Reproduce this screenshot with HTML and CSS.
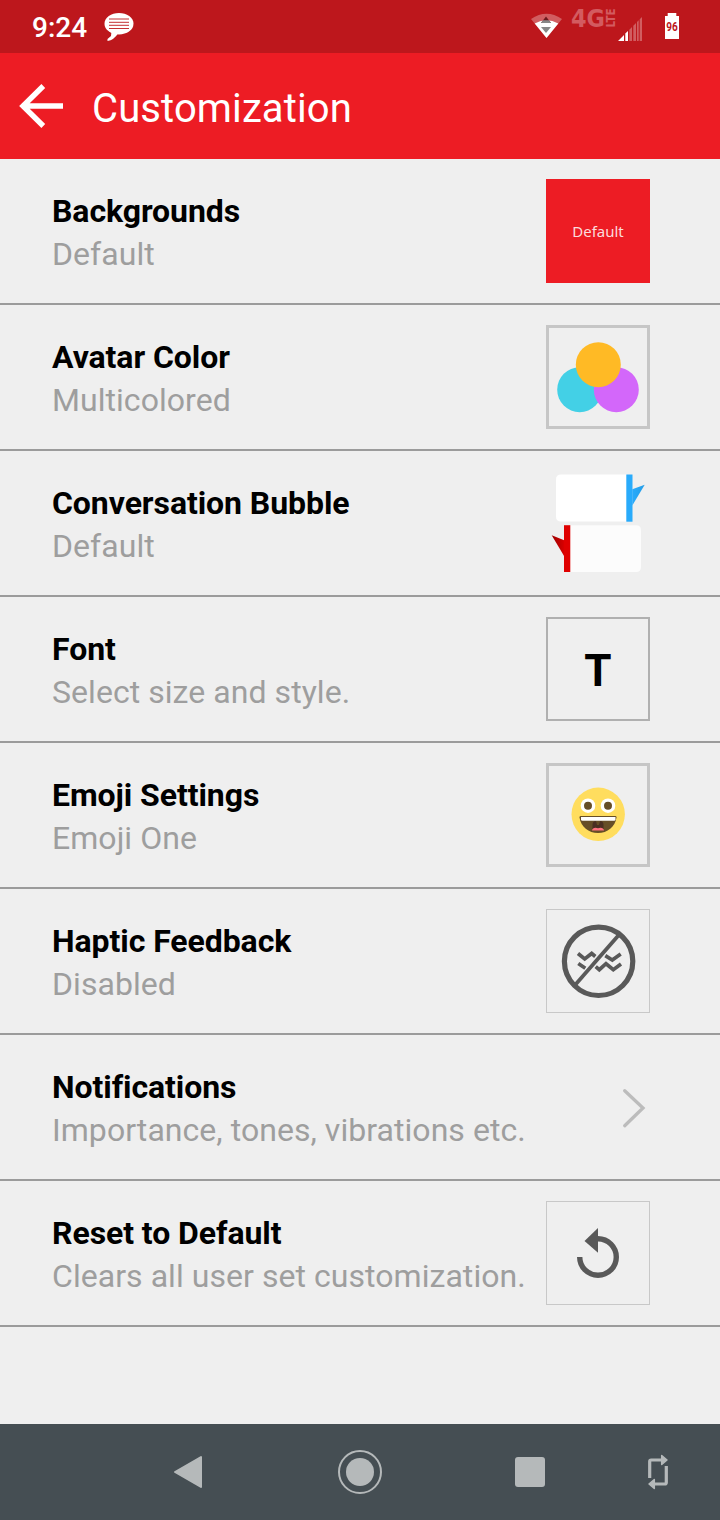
FILE: index.html
```html
<!DOCTYPE html>
<html lang="en">
<head>
    <meta charset="UTF-8">
    <meta name="viewport" content="width=device-width, initial-scale=1.0">
    <title>Customization</title>
    <link rel="stylesheet" href="styles.css">
</head>
<body>

    <div class="status-bar">
        <span class="time">9:24</span>
        <svg class="chat" width="30" height="30" viewBox="104 12 30 30">
            <ellipse cx="119" cy="23.7" rx="14.5" ry="10.8" fill="#fff"/>
            <path d="M111.500 31L111 36L107.500 39V41Q114 40 118 33.500Z" fill="#fff"/>
            <path d="M109 19H129M109 22.300H129M109 25.300H129M109 28.500H129" stroke="#bd171c" stroke-width="0.9"/>
        </svg>
        <svg class="signals" width="160" height="53" viewBox="525 0 160 53">
            <path d="M531 19Q546.500 8.500 562 19L546.500 38Z" fill="#fff" fill-opacity="0.3"/>
            <path d="M534.700 23.500Q546.500 17 558.300 23.500L546.500 38Z" fill="#fff"/>
            <path d="M541 23L546 16.500L551 23Z" fill="#6b1a1d"/>
            <path d="M541 23L543 20.300H549L551 23Z" fill="#888"/>
            <path d="M541 27H551L546 33Z" fill="#888"/>
            <g class="network">
                <text x="571" y="27" font-size="25" textLength="34" lengthAdjust="spacingAndGlyphs">4G</text>
                <text transform="translate(615 27.500) rotate(-90)" font-size="12" textLength="19" lengthAdjust="spacingAndGlyphs">LTE</text>
            </g>
            <path d="M618 41L624 35V41ZM625.300 33.500L628 31V41H625.300Z" fill="#fff"/>
            <path d="M629.300 29.700L632 27V41H629.300ZM633.300 25.700L636 23V41H633.300ZM637 22L638.700 20.300V41H637ZM639.700 19.300L642 17V41H639.700Z" fill="#fff" fill-opacity="0.3"/>
            <path d="M665 16H667.700V13H676.300V16H679V39H665Z" fill="#fff"/>
            <text class="battery" x="672" y="31.300" text-anchor="middle" textLength="11.500" lengthAdjust="spacingAndGlyphs">96</text>
        </svg>
    </div>

    <div class="header">
        <svg width="46" height="46" viewBox="18 83 46 46">
            <path d="M43.300 86L23 106L43.300 126M22 106H63" fill="none" stroke="#fff" stroke-width="5.400"/>
        </svg>
        <h1>Customization</h1>
    </div>

    <div class="settings">
        <div class="row">
            <div class="label">
                <h2>Backgrounds</h2>
                <p>Default</p>
            </div>
            <div class="thumb red">Default</div>
        </div>

        <div class="row">
            <div class="label">
                <h2>Avatar Color</h2>
                <p>Multicolored</p>
            </div>
            <svg class="thumb thick" viewBox="0 0 104 104">
                <circle cx="33.700" cy="64.700" r="22.500" fill="#43d0e6"/>
                <circle cx="70.300" cy="64.700" r="22.500" fill="#d367fa"/>
                <circle cx="52.300" cy="39.700" r="22.500" fill="#ffba25"/>
            </svg>
        </div>

        <div class="row">
            <div class="label">
                <h2>Conversation Bubble</h2>
                <p>Default</p>
            </div>
            <svg class="thumb" viewBox="0 0 104 104">
                <defs>
                    <linearGradient id="blueTail">
                        <stop offset="0" stop-color="#29abfb"/>
                        <stop offset="1" stop-color="#259de6"/>
                    </linearGradient>
                    <linearGradient id="redTail">
                        <stop offset="0" stop-color="#9c0000"/>
                        <stop offset="1" stop-color="#d90000"/>
                    </linearGradient>
                </defs>
                <path d="M81 3.500H15Q10 3.500 10 8.500V45.500Q10 50.500 15 50.500H81Z" fill="#fff"/>
                <path d="M80.300 3.500H86.500V50.700H80.300Z" fill="#29abfb"/>
                <path d="M86.300 18.300L98.700 13.700L86.300 34.500Z" fill="url(#blueTail)"/>
                <path d="M24 54.300H90Q95 54.300 95 59.300V96Q95 101 90 101H24Z" fill="#fcfcfc"/>
                <path d="M18 54.200H24.300V101H18Z" fill="#df0000"/>
                <path d="M18.200 69.300L5.700 64.200L18.200 85.300Z" fill="url(#redTail)"/>
            </svg>
        </div>

        <div class="row">
            <div class="label">
                <h2>Font</h2>
                <p>Select size and style.</p>
            </div>
            <div class="thumb medium">T</div>
        </div>

        <div class="row">
            <div class="label">
                <h2>Emoji Settings</h2>
                <p>Emoji One</p>
            </div>
            <svg class="thumb thick" viewBox="0 0 104 104">
                <circle cx="52.200" cy="51.300" r="26.700" fill="#ffdd5e"/>
                <circle cx="42" cy="42.700" r="7.300" fill="#fff"/>
                <circle cx="62" cy="42.700" r="7.300" fill="#fff"/>
                <circle cx="42" cy="42.700" r="4" fill="#664e27"/>
                <circle cx="62" cy="42.700" r="4" fill="#664e27"/>
                <path d="M34.500 53H69.500Q70.700 53 70.500 54.500C69 64 61.500 70 52 70S35 64 33.500 54.500Q33.300 53 34.500 53Z" fill="#664e27"/>
                <path d="M46.500 66V62Q46.500 58 50 58L51 62H53L54 58Q57.500 58 57.500 62V66Z" fill="#4b2f22"/>
                <path d="M35 54H69.500V56.500Q69.500 57.700 68 57.700H36.500Q35 57.700 35 56.500Z" fill="#fff"/>
                <path d="M46 67.500Q46.500 64.700 49.500 64.700L52 65.200L54.500 64.700Q57.500 64.700 58 67.500Z" fill="#ff717f"/>
            </svg>
        </div>

        <div class="row">
            <div class="label">
                <h2>Haptic Feedback</h2>
                <p>Disabled</p>
            </div>
            <svg class="thumb thin" viewBox="0 0 104 104">
                <g fill="none" stroke="#595959">
                    <circle cx="52.600" cy="52.300" r="34.200" stroke-width="5.200"/>
                    <path d="M29.300 75.700L73 25.700" stroke-width="3.800"/>
                    <path d="M32 44.500L38.700 50L45.700 44.500L49.300 47.500M59.300 46.700L66.300 51L74.700 45M32.300 54.500L39.300 59.300M49.700 57.700L53.300 60.700L60 54.700L67.300 60.700L75 55" stroke-width="3.700"/>
                </g>
            </svg>
        </div>

        <div class="row">
            <div class="label">
                <h2>Notifications</h2>
                <p>Importance, tones, vibrations etc.</p>
            </div>
            <svg class="thumb" viewBox="0 0 104 104">
                <path d="M78.700 35.700L97 53L78.700 70.700" fill="none" stroke="#bcbcbc" stroke-width="3.300" stroke-linecap="round"/>
            </svg>
        </div>

        <div class="row">
            <div class="label">
                <h2>Reset to Default</h2>
                <p>Clears all user set customization.</p>
            </div>
            <svg class="thumb thin" viewBox="0 0 104 104">
                <path d="M33.700 56A18.300 18.300 0 1 0 52 37.700H50" fill="none" stroke="#595959" stroke-width="5.400"/>
                <path d="M52 27V51.700L38.500 40Z" fill="#595959"/>
            </svg>
        </div>
    </div>

    <div class="nav-bar">
        <svg width="44" height="44" viewBox="166 1450 44 44">
            <path d="M175 1472L201 1457V1487Z" fill="#b5b9ba" stroke="#b5b9ba" stroke-width="2" stroke-linejoin="round"/>
        </svg>
        <svg width="44" height="44" viewBox="0 0 44 44">
            <circle cx="22" cy="22" r="21" fill="none" stroke="#b5b9ba" stroke-width="2"/>
            <circle cx="22" cy="22" r="14" fill="#b5b9ba"/>
        </svg>
        <div class="recent"></div>
        <svg width="40" height="40" viewBox="0 0 40 40">
            <path d="M11.700 26V9.500Q11.700 8 13.200 8H24M28.300 14V30.500Q28.300 32 26.800 32H16" fill="none" stroke="#b5b9ba" stroke-width="3.200"/>
            <path d="M23.700 3.500V12.500L29 8ZM16.300 27.500V36.500L11 32Z" fill="#b5b9ba" stroke="#b5b9ba" stroke-width="1.500" stroke-linejoin="round"/>
        </svg>
    </div>

</body>
</html>
```
FILE: styles.css
```css
* {
    box-sizing: border-box;
}
body {
    margin: 0;
    height: 1520px;
    display: flex;
    flex-direction: column;
    font-family: Roboto, sans-serif;
    background-color: #efefef;
}
h1, h2, p {
    margin: 0;
}
.status-bar {
    display: flex;
    align-items: center;
    height: 53px;
    padding: 0 35px 0 32px;
    background-color: #bd171c;
    color: white;
}
.time {
    width: 72px;
    padding-top: 1px;
    font-size: 28px;
    font-weight: 500;
}
.signals {
    margin-left: auto;
}
.network {
    fill: #d35b60;
    font-family: "DejaVu Sans", sans-serif;
    font-weight: 700;
}
.battery {
    fill: #bd171c;
    font-size: 13px;
    font-weight: 700;
}
.header {
    display: flex;
    align-items: center;
    gap: 28px;
    height: 106px;
    padding-left: 18px;
    background-color: #ed1c24;
    color: white;
}
.header h1 {
    padding-top: 4px;
    font-size: 40px;
    font-weight: 400;
    letter-spacing: 0.12px;
}
.settings {
    flex: 1;
}
.row {
    display: flex;
    align-items: center;
    justify-content: space-between;
    height: 146px;
    padding: 0 70px 0 52px;
    border-bottom: 2px solid #9b9b9b;
}
.label {
    padding-top: 3px;
    font-size: 32px;
    line-height: 43px;
    white-space: nowrap;
}
.label h2 {
    font-size: 32px;
    font-weight: 700;
    letter-spacing: -0.07px;
    font-variant-ligatures: common-ligatures;
}
.label p {
    color: #9e9e9e;
    letter-spacing: 0.05px;
}
.thumb {
    display: block;
    flex: none;
    width: 104px;
    height: 104px;
    text-align: center;
}
.red {
    background-color: #ed1c24;
    color: #fbdcdd;
    font-family: "Noto Sans", sans-serif;
    font-size: 15px;
    line-height: 104px;
}
.thin {
    box-shadow: inset 0 0 0 1px #c8c8c8;
}
.medium {
    box-shadow: inset 0 0 0 2px #b0b0b0;
    font-size: 44px;
    font-weight: 700;
    line-height: 108px;
}
.thick {
    box-shadow: inset 0 0 0 3px #c6c6c6;
}
.nav-bar {
    display: grid;
    grid-template-columns: 172px 172px 168px 88px;
    place-items: center;
    height: 96px;
    padding-left: 102px;
    background-color: #454e53;
}
.recent {
    width: 30px;
    height: 30px;
    border-radius: 3px;
    background-color: #b5b9ba;
}
```
